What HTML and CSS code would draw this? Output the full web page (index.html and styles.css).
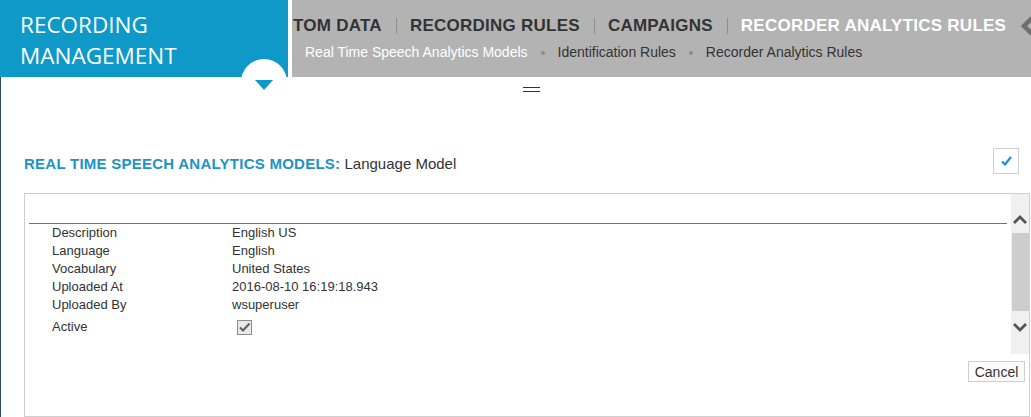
FILE: index.html
```html
<!DOCTYPE html>
<html lang="en">
<head>
<meta charset="utf-8">
<title>Recording Management</title>
<link rel="stylesheet" href="styles.css">
</head>
<body>
<header class="topbar">
  <div class="brand">
    <h1 class="brand-title">RECORDING<br>MANAGEMENT</h1>
    <span class="brand-toggle"><span class="caret"></span></span>
  </div>
  <nav class="nav">
    <div class="tabs">
      <span class="tab">TOM DATA</span>
      <span class="sep"></span>
      <span class="tab">RECORDING RULES</span>
      <span class="sep"></span>
      <span class="tab">CAMPAIGNS</span>
      <span class="sep"></span>
      <span class="tab active">RECORDER ANALYTICS RULES</span>
      <svg class="nav-arrow" width="16" height="20" viewBox="0 0 16 20"><polyline points="12,2 4,10 12,18" fill="none" stroke="#6e6e6e" stroke-width="4.5"/></svg>
    </div>
    <div class="subtabs">
      <span class="subtab active">Real Time Speech Analytics Models</span>
      <span class="dot"></span>
      <span class="subtab">Identification Rules</span>
      <span class="dot"></span>
      <span class="subtab">Recorder Analytics Rules</span>
    </div>
  </nav>
</header>
<main class="page">
  <div class="handle"><span class="handle-bars"></span></div>
  <div class="title-row">
    <h2 class="title"><span class="title-label">REAL TIME SPEECH ANALYTICS MODELS:</span> <span class="title-name">Language Model</span></h2>
    <button class="confirm" type="button" aria-label="Save">
      <svg width="11" height="10" viewBox="0 0 11 10"><path d="M1 5.5 L4 8.5 L10 1" fill="none" stroke="#1b93d2" stroke-width="2.2"/></svg>
    </button>
  </div>
  <section class="panel">
    <div class="panel-scroll">
      <div class="panel-body">
        <div class="panel-head"></div>
        <div class="fields">
          <div class="field"><span class="field-label">Description</span><span class="field-value">English US</span></div>
          <div class="field"><span class="field-label">Language</span><span class="field-value">English</span></div>
          <div class="field"><span class="field-label">Vocabulary</span><span class="field-value">United States</span></div>
          <div class="field"><span class="field-label">Uploaded At</span><span class="field-value">2016-08-10 16:19:18.943</span></div>
          <div class="field"><span class="field-label">Uploaded By</span><span class="field-value">wsuperuser</span></div>
          <div class="field checkrow"><span class="field-label">Active</span>
            <svg class="checkbox" width="15" height="15" viewBox="0 0 15 15"><rect x="0.5" y="0.5" width="14" height="14" fill="#e9e9e9" stroke="#8c8c8c"/><path d="M3 7.5 L6 10.5 L12.5 3.5" fill="none" stroke="#5f5f5f" stroke-width="2"/></svg>
          </div>
        </div>
      </div>
      <div class="scrollbar">
        <svg class="sb-arrow" width="14" height="17" viewBox="0 0 14 17"><polyline points="1,12 7,6 13,12" fill="none" stroke="#555" stroke-width="2.8"/></svg>
        <span class="sb-thumb"></span>
        <svg class="sb-arrow down" width="14" height="17" viewBox="0 0 14 17"><polyline points="1,5 7,11 13,5" fill="none" stroke="#555" stroke-width="2.8"/></svg>
      </div>
    </div>
    <div class="panel-actions">
      <button class="btn" type="button">Cancel</button>
    </div>
  </section>
</main>
</body>
</html>
```
FILE: styles.css
```css
* { box-sizing: border-box; }

body {
  margin: 0;
  font-family: "Liberation Sans", Arial, sans-serif;
  color: #333;
  background: #fff;
  overflow: hidden;
}

.topbar {
  display: flex;
  height: 77px;
  gap: 4px;
}

.brand {
  position: relative;
  flex: none;
  width: 288px;
  background: #0e99c9;
  padding: 9px 0 0 20px;
}

.brand-title {
  margin: 0;
  font-family: "Open Sans", sans-serif;
  font-weight: 400;
  font-size: 22.5px;
  line-height: 31px;
  color: #fff;
}

.brand-toggle {
  position: absolute;
  left: 241px;
  top: 59px;
  width: 46px;
  height: 46px;
  border-radius: 50%;
  background: #fff;
  z-index: 2;
  display: flex;
  justify-content: center;
  padding-top: 21px;
}

.caret {
  width: 0;
  height: 0;
  border-left: 9px solid transparent;
  border-right: 9px solid transparent;
  border-top: 10px solid #0e99c9;
}

.nav {
  flex: 1;
  min-width: 0;
  background: #b3b3b3;
  overflow: hidden;
  padding: 16px 0 0 1px;
}

.tabs {
  display: flex;
  align-items: center;
  white-space: nowrap;
  font-weight: bold;
  font-size: 17px;
  line-height: 20px;
  letter-spacing: 0.25px;
}

.tab { color: #333; flex: none; }
.tab.active { color: #fff; }

.sep {
  flex: none;
  width: 1px;
  height: 16px;
  background: #8e8e8e;
  margin: 0 13px 0 14px;
}

.nav-arrow {
  flex: none;
  margin-left: 14px;
}

.subtabs {
  display: flex;
  align-items: center;
  margin: 8px 0 0 12px;
  font-size: 14px;
  line-height: 17px;
  white-space: nowrap;
}

.subtab { color: #333; }
.subtab.active { color: #fff; }

.dot {
  flex: none;
  width: 4px;
  height: 4px;
  border-radius: 50%;
  background: #8d8d8d;
  margin: 0 13px;
}

.page {
  border-left: 1px solid #2b4a66;
  min-height: calc(100vh - 77px);
}

.handle {
  margin-left: 522px;
  padding-top: 10px;
}

.handle-bars {
  display: block;
  width: 17px;
  height: 5px;
  border-top: 1px solid #333;
  border-bottom: 1px solid #333;
}

.title-row {
  display: flex;
  align-items: center;
  justify-content: space-between;
  margin-top: 56px;
  padding: 0 12px 0 23px;
}

.title {
  margin: 0;
  font-size: 15px;
  font-weight: normal;
  line-height: 18px;
  padding-top: 6px;
}

.title-label {
  font-weight: bold;
  color: #1c94c6;
  letter-spacing: 0.25px;
}

.title-name { color: #333; }

.confirm {
  width: 26px;
  height: 26px;
  border: 1px solid #cfcfcf;
  background: #fff;
  padding: 0;
  display: flex;
  align-items: center;
  justify-content: center;
}

.panel {
  margin: 19px 1px 0 23px;
  border: 1px solid #cfcfcf;
  height: 224px;
}

.panel-scroll {
  display: flex;
  height: 160px;
}

.panel-body {
  flex: 1;
  padding: 0 4px;
}

.panel-head {
  height: 30px;
  border-bottom: 1px solid #1b8ec2;
}

.fields { padding-left: 23px; }

.field {
  display: flex;
  height: 18px;
  line-height: 18px;
  font-size: 13px;
  color: #333;
}

.field-label { width: 180px; flex: none; }

.field.checkrow {
  height: 26px;
  line-height: 26px;
  align-items: center;
}

.checkbox { margin-left: 5px; }

.scrollbar {
  flex: none;
  width: 18px;
  background: #f0f0f0;
  display: flex;
  flex-direction: column;
  align-items: center;
  padding-top: 17px;
}

.sb-thumb {
  display: block;
  width: 17px;
  height: 78px;
  margin: 5px 0 8px 1px;
  background: #cdcdcd;
}

.panel-actions {
  display: flex;
  justify-content: flex-end;
  padding: 7px 4px 0 0;
}

.btn {
  width: 57px;
  height: 21px;
  border: 1px solid #cfcfcf;
  background: #fcfcfc;
  font-family: "Liberation Sans", Arial, sans-serif;
  font-size: 14px;
  color: #333;
  padding: 0;
}
```
